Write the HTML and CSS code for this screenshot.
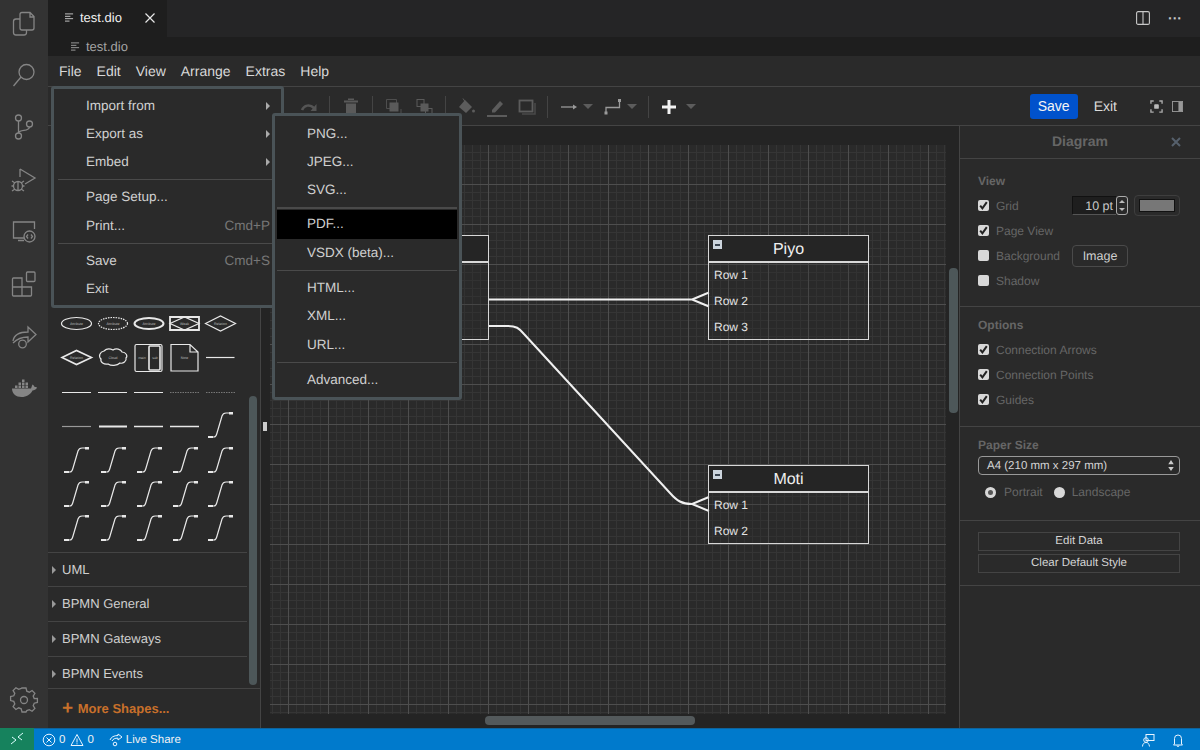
FILE: index.html
```html
<!doctype html>
<html>
<head>
<meta charset="utf-8">
<title>test.dio</title>
<link rel="stylesheet" href="styles.css">
</head>
<body>
<svg class="defs" width="0" height="0">
  <symbol id="tick" viewBox="0 0 11 11"><path d="M2.2 5.6 4.4 8.4 8.8 2.2" fill="none" stroke="#222" stroke-width="2"/></symbol>
  <symbol id="curve" viewBox="0 0 32 30"><path d="M2 26H8Q10 26 11 22L16 5Q17 2 20 2H26" fill="none" stroke="#e8e8e8" stroke-width="1.2"/><path d="M2 25h5v2H2zM23 1h4v2.500h-4z" fill="#e8e8e8"/></symbol>
  <symbol id="caret" viewBox="0 0 10 6"><path d="M0 0H10L5 5z" fill="#5c5c5c"/></symbol>
</svg>
<div class="shell">
  <nav class="activity">
    <svg class="act" viewBox="0 0 48 46"><path d="M20 19h-4a2.500 2.500 0 0 0-2.500 2.500v11A2.500 2.500 0 0 0 16 35h8a2.500 2.500 0 0 0 2.500-2.500V30M22 12.500h8l4 4V28a2 2 0 0 1-2 2H22a2 2 0 0 1-2-2V14.500a2 2 0 0 1 2-2zM30 12.500V17h4"/></svg>
    <svg class="act" viewBox="0 0 48 46"><circle cx="26.500" cy="20" r="7.500"/><path d="M21 25 13.500 34"/></svg>
    <svg class="act" viewBox="0 0 48 46"><circle cx="18.500" cy="14" r="3"/><circle cx="29.500" cy="20" r="3"/><circle cx="18.500" cy="32" r="3"/><path d="M18.500 17V29M29.500 23C29 28 20 25 18.500 29"/></svg>
    <svg class="act" viewBox="0 0 48 46"><path d="M20 13 35 22 25 28M20 13V21"/><circle cx="18" cy="30" r="4.500"/><path d="M12 25l3 2M24 25l-3 2M11.500 30h2M22.500 30h2M12 35l3-2M24 35l-3-2M18 26v8"/></svg>
    <svg class="act" viewBox="0 0 48 46"><path d="M24 30H13.500V14h21V21M18 32.500h6"/><circle cx="29.500" cy="28.500" r="5.500"/><path d="M28 26.500l-1.500 2 1.500 2M31 26.500l1.500 2-1.500 2"/></svg>
    <svg class="act" viewBox="0 0 48 46"><rect x="26.500" y="12" width="8.500" height="9.500" rx="1"/><path d="M12.500 19a1 1 0 0 1 1-1H22V36H13.500a1 1 0 0 1-1-1zM12.500 27H31.500V35a1 1 0 0 1-1 1H22"/></svg>
    <svg class="act" viewBox="0 0 48 46"><path d="M13 29c1-6 6-9 15-9v-5l8 7.500-8 7.500v-5c-6 0-10 1-15 6"/><circle cx="22.500" cy="32" r="3.800"/></svg>
    <svg class="act act-fill" viewBox="0 0 48 46"><path d="M12 24.500h19c.6-1 .8-3 1.500-4 1 .7 2 1.500 2 2.500 1 0 2 0 2.500.8-1 2-3 2.500-4.500 2.700-2 4-6 6.500-11 6.500-5.500 0-9.500-3.500-9.500-8.500z"/><path d="M15 21.500h2.500V24H15zM18.500 21.500H21V24h-2.500zM22 21.500h2.500V24H22zM25.500 21.500H28V24h-2.500zM18.500 18.500H21V21h-2.500zM22 18.500h2.500V21H22zM25.500 18.500H28V21h-2.500zM22 15.500h2.500V18H22z"/></svg>
    <svg class="act gear" viewBox="0 0 48 46"><circle cx="24" cy="23" r="3.500"/><path d="M22 11h4l.8 3.200 2.500 1 2.800-1.700 2.800 2.800-1.700 2.800 1 2.500L37.400 21.400v4l-3.200.8-1 2.500 1.700 2.800-2.800 2.800-2.800-1.700-2.500 1L26 35h-4l-.8-3.200-2.500-1-2.800 1.700-2.800-2.800 1.700-2.800-1-2.500-3.200-.8v-4l3.200-.8 1-2.500-1.700-2.800 2.800-2.800 2.800 1.700 2.500-1z"/></svg>
  </nav>

  <div class="editor">
    <div class="tabs">
      <div class="tab">
        <svg class="lines" viewBox="0 0 10 10"><path d="M0 1h9M0 3.700h6M0 6.300h9M0 9h5"/></svg>
        <span>test.dio</span>
        <svg class="tab-x" viewBox="0 0 10 10"><path d="M.5.500l9 9M9.500.500l-9 9"/></svg>
      </div>
      <div class="tab-actions">
        <svg class="split" viewBox="0 0 14 14"><rect x=".6" y=".6" width="12.800" height="12.800" rx="1.500"/><path d="M7 .6v12.800"/></svg>
        <span class="dots">···</span>
      </div>
    </div>
    <div class="crumbs">
      <svg class="lines dim" viewBox="0 0 10 10"><path d="M0 1h9M0 3.700h6M0 6.300h9M0 9h5"/></svg>
      <span>test.dio</span>
    </div>
    <div class="menubar">
      <span>File</span><span>Edit</span><span>View</span><span>Arrange</span><span>Extras</span><span>Help</span>
    </div>
    <div class="toolbar">
      <div class="tools">
        <svg class="tool" viewBox="0 0 20 20"><path d="M3 13c2-5 8-6 12-2" fill="none" stroke="#555" stroke-width="2.500"/><path d="M17.500 7v7h-6z" fill="#555"/></svg>
        <i class="sep"></i>
        <svg class="tool" viewBox="0 0 20 20"><path d="M3 3.500h14v2H3zM7 1.500h6v1.500H7zM5 6.500h10v12H5z" fill="#5a5a5a"/></svg>
        <i class="sep"></i>
        <svg class="tool" viewBox="0 0 20 20"><path d="M2.500 2.500h10v4" fill="none" stroke="#4e4e4e"/><path d="M2.500 2.500v9h4" fill="none" stroke="#4e4e4e"/><rect x="5.500" y="5.500" width="9" height="9" fill="#5a5a5a"/><path d="M17 12v5h-4" fill="none" stroke="#4e4e4e"/></svg>
        <svg class="tool" viewBox="0 0 20 20"><rect x="3" y="2.500" width="7" height="7" fill="none" stroke="#5a5a5a"/><rect x="6.500" y="6.500" width="8" height="8" fill="#5a5a5a"/><rect x="11.500" y="11.500" width="6.500" height="6.500" fill="none" stroke="#5a5a5a"/></svg>
        <i class="sep"></i>
        <svg class="tool" viewBox="0 0 20 20"><path d="M9 3 16 10 10 16 3 10z" fill="#5c5c5c"/><path d="M7 1.500 10 6" stroke="#5c5c5c" fill="none"/><circle cx="17.500" cy="14" r="1.500" fill="#5c5c5c"/></svg>
        <svg class="tool" viewBox="0 0 20 20"><path d="M5 13 13 4l3 3-8 8.500H5z" fill="#5c5c5c"/><path d="M0 18h20v2H0z" fill="#5c5c5c"/></svg>
        <svg class="tool" viewBox="0 0 20 20"><rect x="2.500" y="3.500" width="13" height="11" fill="none" stroke="#5c5c5c" stroke-width="1.800"/><path d="M5 17h13V6" fill="none" stroke="#4a4a4a" stroke-width="1.500"/></svg>
        <i class="sep"></i>
        <div class="tool-pair">
          <svg class="wide" viewBox="0 0 18 10"><path d="M1 5h13" stroke="#9a9a9a" stroke-width="1.300"/><path d="M13 2.500 17 5l-4 2.500z" fill="#9a9a9a"/></svg>
          <svg class="caret" viewBox="0 0 10 6"><use href="#caret"/></svg>
        </div>
        <div class="tool-pair">
          <svg class="wide-tall" viewBox="0 0 18 18"><path d="M2 15V9.500h13.500V3" fill="none" stroke="#9a9a9a" stroke-width="1.300"/><rect x=".5" y="13.500" width="3" height="3" fill="#9a9a9a"/><rect x="14" y="1" width="3" height="3" fill="#9a9a9a"/></svg>
          <svg class="caret" viewBox="0 0 10 6"><use href="#caret"/></svg>
        </div>
        <i class="sep"></i>
        <div class="tool-pair">
          <svg class="plus" viewBox="0 0 14 14"><path d="M5.500 0h3v5.500H14v3H8.500V14h-3V8.500H0v-3h5.500z" fill="#f2f2f2"/></svg>
          <svg class="caret" viewBox="0 0 10 6"><use href="#caret"/></svg>
        </div>
      </div>
      <div class="tool-right">
        <button class="save">Save</button>
        <span class="exit">Exit</span>
        <svg class="full" viewBox="0 0 14 14"><path d="M1 4V1h3M10 1h3v3M13 10v3h-3M4 13H1v-3" fill="none" stroke="#aaa" stroke-width="1.500"/><rect x="4.500" y="4.500" width="5" height="5" rx="1" fill="#bbb"/></svg>
        <svg class="format" viewBox="0 0 12 12"><rect x=".5" y=".5" width="11" height="11" fill="none" stroke="#999"/><rect x="7" y="1" width="4" height="10" fill="#999"/></svg>
      </div>
    </div>

    <div class="workspace">
      <aside class="sidebar">
        <svg class="palette" viewBox="48 126 199 426">
          <g fill="none" stroke="#e8e8e8" stroke-width="1.200">
            <ellipse cx="76.500" cy="323.500" rx="15" ry="6"/>
            <ellipse cx="113" cy="323.500" rx="14.500" ry="6" stroke-dasharray="1.500 1"/>
            <ellipse cx="149" cy="323.500" rx="14.500" ry="5.500" stroke-width="2"/>
            <path d="M170 317h29v13h-29z" stroke-width="1.800"/>
            <path d="M170 323.500 184.500 317l14.500 6.500-14.500 6.500z"/>
            <path d="M205.500 323.500 220.500 316l15 7.500-15 7.500z"/>
            <path d="M62 357.500 76.500 350.500l15 7-15 7z" stroke-width="1.600"/>
            <path d="M104 351c3-3 7-2 9-1 3-2 8-1 9 2 4 0 6 4 4 6 1 3-3 6-6 5-3 3-9 3-12 1-4 1-8-2-7-5-3-3-1-7 3-8z"/>
            <rect x="135" y="344.500" width="27" height="27" rx="1.500"/>
            <rect x="149" y="346" width="11" height="24" rx="1" stroke-width="1.600"/>
            <path d="M171 344.500h19l8 7.500v19h-27zM190 344.500v7.500h8"/>
            <path d="M206 357.500h28.500"/>
            <path d="M62 392.500h29M98 392.500h29M134 392.500h29"/>
            <path d="M170 392.500h29M206 392.500h29" stroke="#777" stroke-dasharray="1.500 1"/>
            <path d="M62 426.500h29" stroke="#999"/>
            <path d="M99 426.500h28" stroke-width="2"/>
            <path d="M134 426.500h29M170 426.500h29" stroke-width="1.600"/>
          </g>
          <g class="tiny">
            <text x="76.500" y="325">Attribute</text>
            <text x="113" y="325">Attribute</text>
            <text x="149" y="325">Attribute</text>
            <text x="184.500" y="325">Weak</text>
            <text x="220.500" y="325">Relation</text>
            <text x="76.500" y="359">Relation</text>
            <text x="113" y="359">Cloud</text>
            <text x="142" y="359">main</text>
            <text x="155" y="359">sub</text>
            <text x="184.500" y="359">Note</text>
          </g>
          <use href="#curve" x="206" y="411" width="32" height="30"/>
          <use href="#curve" x="62" y="446" width="32" height="30"/><use href="#curve" x="99" y="446" width="32" height="30"/><use href="#curve" x="135" y="446" width="32" height="30"/><use href="#curve" x="171" y="446" width="32" height="30"/><use href="#curve" x="206" y="446" width="32" height="30"/>
          <use href="#curve" x="62" y="480" width="32" height="30"/><use href="#curve" x="99" y="480" width="32" height="30"/><use href="#curve" x="135" y="480" width="32" height="30"/><use href="#curve" x="171" y="480" width="32" height="30"/><use href="#curve" x="206" y="480" width="32" height="30"/>
          <use href="#curve" x="62" y="514" width="32" height="30"/><use href="#curve" x="99" y="514" width="32" height="30"/><use href="#curve" x="135" y="514" width="32" height="30"/><use href="#curve" x="171" y="514" width="32" height="30"/><use href="#curve" x="206" y="514" width="32" height="30"/>
        </svg>
        <div class="group group-first">UML</div>
        <div class="group">BPMN General</div>
        <div class="group">BPMN Gateways</div>
        <div class="group group-last">BPMN Events</div>
        <div class="more"><b>+</b> More Shapes...</div>
        <div class="side-thumb"></div>
      </aside>

      <main class="canvas">
        <div class="sheet">
          <svg class="edges" viewBox="270 145 676 569">
            <g fill="none" stroke="#f0f0f0" stroke-width="2">
              <path d="M488 299.500H692M709 292.500 692 299.500 709 306.500"/>
              <path d="M488 326H508C516 326 519 328 524 334L670 493C677 501 682 504 692 504M709 497 692 504 709 511"/>
            </g>
          </svg>
          <div class="entity entity-hidden">
            <div class="entity-head"></div>
          </div>
          <div class="entity entity-piyo">
            <div class="entity-head"><i class="fold"></i>Piyo</div>
            <div class="row">Row 1</div><div class="row">Row 2</div><div class="row">Row 3</div>
          </div>
          <div class="entity entity-moti">
            <div class="entity-head"><i class="fold"></i>Moti</div>
            <div class="row">Row 1</div><div class="row">Row 2</div>
          </div>
        </div>
        <i class="handle"></i>
        <div class="thumb-v"></div>
        <div class="thumb-h"></div>
      </main>

      <aside class="panel">
        <div class="panel-head"><span>Diagram</span><svg class="panel-x" viewBox="0 0 10 10"><path d="M1 1l8 8M9 1l-8 8"/></svg></div>
        <section class="sect sect-view">
          <h4>View</h4>
          <div class="opt opt-grid">
            <span class="box"><svg viewBox="0 0 11 11"><use href="#tick"/></svg></span><label>Grid</label>
            <span class="pt">10 pt</span>
            <span class="spin"><i></i><i class="down"></i></span>
            <span class="swatch"><i></i></span>
          </div>
          <div class="opt"><span class="box"><svg viewBox="0 0 11 11"><use href="#tick"/></svg></span><label>Page View</label></div>
          <div class="opt"><span class="box"></span><label>Background</label><span class="img-btn">Image</span></div>
          <div class="opt"><span class="box"></span><label>Shadow</label></div>
        </section>
        <section class="sect sect-options">
          <h4>Options</h4>
          <div class="opt"><span class="box"><svg viewBox="0 0 11 11"><use href="#tick"/></svg></span><label>Connection Arrows</label></div>
          <div class="opt"><span class="box"><svg viewBox="0 0 11 11"><use href="#tick"/></svg></span><label>Connection Points</label></div>
          <div class="opt"><span class="box"><svg viewBox="0 0 11 11"><use href="#tick"/></svg></span><label>Guides</label></div>
        </section>
        <section class="sect sect-paper">
          <h4>Paper Size</h4>
          <div class="select"><span>A4 (210 mm x 297 mm)</span><svg viewBox="0 0 6 12"><path d="M3 0 6 4.500H0zM3 12 0 7.500H6z" fill="#ccc"/></svg></div>
          <div class="radios">
            <span class="radio on"></span><label>Portrait</label>
            <span class="radio"></span><label>Landscape</label>
          </div>
        </section>
        <section class="sect sect-btns">
          <div class="wide-btn">Edit Data</div>
          <div class="wide-btn">Clear Default Style</div>
        </section>
      </aside>
    </div>
  </div>
</div>

<footer class="status">
  <span class="remote"><svg viewBox="0 0 14 14"><path d="M1 12 6 8 2 5M13 1 8 5l4 3" fill="none" stroke="#dff" stroke-width="1"/></svg></span>
  <span class="stat errs">
    <svg viewBox="0 0 14 14"><circle cx="7" cy="7" r="5.800"/><path d="M4.500 4.500l5 5M9.500 4.500l-5 5"/></svg>0
    <svg viewBox="0 0 14 14"><path d="M7 1.500 13 12.500H1z"/><path d="M7 5.500v4M7 10.300v1"/></svg>0
  </span>
  <span class="stat share">
    <svg viewBox="0 0 14 14"><path d="M1 7c1-3 4-4.500 8-4.500V1l4 3-4 3V5.200C6 5 4 6 3 8"/><circle cx="6" cy="11" r="1.800"/></svg>Live Share
  </span>
  <span class="status-right">
    <svg viewBox="0 0 14 14"><rect x="5" y="1.500" width="8" height="6"/><circle cx="5" cy="7" r="2.300"/><path d="M1.500 13.500c0-2.500 1.500-4 3.500-4s3 1 3.500 4"/></svg>
    <svg viewBox="0 0 14 14"><path d="M3.500 11V5.500a3.500 3.500 0 0 1 7 0V11l1 1h-9zM6 12.500c0 1.500 2 1.500 2 0"/></svg>
  </span>
</footer>

<div class="menu menu-file">
  <div class="item has-sub">Import from</div>
  <div class="item has-sub">Export as</div>
  <div class="item has-sub">Embed</div>
  <hr>
  <div class="item">Page Setup...</div>
  <div class="item">Print...<em>Cmd+P</em></div>
  <hr>
  <div class="item">Save<em>Cmd+S</em></div>
  <div class="item">Exit</div>
</div>
<div class="menu menu-export">
  <div class="item">PNG...</div>
  <div class="item">JPEG...</div>
  <div class="item">SVG...</div>
  <hr class="thick">
  <div class="item active">PDF...</div>
  <div class="item">VSDX (beta)...</div>
  <hr>
  <div class="item">HTML...</div>
  <div class="item">XML...</div>
  <div class="item">URL...</div>
  <hr>
  <div class="item">Advanced...</div>
</div>
</body>
</html>
```

FILE: styles.css
```css
html, body {
    margin: 0;
    width: 1200px;
    height: 750px;
    overflow: hidden;
    background: #2a2a2a;
    font-family: "Liberation Sans", Arial, sans-serif;
    color: #d0d0d0;
    text-rendering: geometricPrecision;
}
body {
    display: flex;
    flex-direction: column;
    position: relative;
}
.defs {
    position: absolute;
}
.shell {
    display: flex;
    height: 728px;
}

/* activity bar */
.activity {
    width: 48px;
    flex: none;
    background: #333;
    display: flex;
    flex-direction: column;
    gap: 6px;
}
.act {
    width: 48px;
    height: 46px;
    flex: none;
    fill: none;
    stroke: #858585;
    stroke-width: 1.300;
}
.act-fill {
    fill: #858585;
    stroke: none;
}
.gear {
    margin-top: auto;
    margin-bottom: 5px;
}

.editor {
    flex: 1;
    min-width: 0;
    display: flex;
    flex-direction: column;
}

/* tabs */
.tabs {
    height: 37px;
    background: #252526;
    display: flex;
    justify-content: space-between;
}
.tab {
    width: 119px;
    background: #1e1e1e;
    display: flex;
    align-items: center;
    font-size: 13px;
    color: #f0f0f0;
    padding: 0 0 2px 17px;
    box-sizing: border-box;
}
.lines {
    width: 9px;
    height: 9px;
    fill: none;
    stroke: #c0c0c0;
    stroke-width: 1.100;
    margin-right: 6px;
}
.lines.dim {
    stroke: #999;
}
.tab-x {
    width: 10px;
    height: 10px;
    margin-left: 23px;
    stroke: #e8e8e8;
    stroke-width: 1.200;
}
.tab-actions {
    display: flex;
    align-items: center;
    padding: 0 18px 2px 0;
}
.split {
    width: 14px;
    height: 14px;
    fill: none;
    stroke: #c8c8c8;
    stroke-width: 1.100;
}
.dots {
    margin-left: 18px;
    width: 14px;
    font-size: 14px;
    font-weight: bold;
    color: #c8c8c8;
}
.crumbs {
    height: 19px;
    background: #1e1e1e;
    display: flex;
    align-items: center;
    padding-left: 23px;
    font-size: 13px;
    color: #a4a4a4;
}

/* drawio bars */
.menubar {
    height: 30px;
    background: #2a2a2a;
    border-bottom: 1px solid #444;
    display: flex;
    align-items: center;
    gap: 15px;
    padding-left: 11px;
    font-size: 14px;
    color: #d8d8d8;
}
.toolbar {
    height: 38px;
    box-sizing: content-box;
    background: #2a2a2a;
    border-bottom: 1px solid #444;
    display: flex;
    align-items: center;
    justify-content: space-between;
}
.tools {
    margin: 2px 0 0 246px;
    display: grid;
    grid-template-columns: 30px 11px 32px 11px 31px 30px 12px 30px 31px 30px 10px 48px 40px 16px 46px;
    align-items: center;
    justify-items: center;
}
.tool {
    width: 20px;
    height: 20px;
}
.sep {
    width: 1px;
    height: 22px;
    background: #444;
}
.tool-pair {
    display: flex;
    align-items: center;
    gap: 5px;
}
.wide {
    width: 18px;
    height: 10px;
}
.wide-tall {
    width: 18px;
    height: 18px;
}
.plus {
    width: 14px;
    height: 14px;
    margin-right: 5px;
}
.caret {
    width: 10px;
    height: 6px;
}
.tool-right {
    display: flex;
    align-items: center;
    padding-right: 17px;
}
.save {
    width: 48px;
    height: 25px;
    border: 0;
    padding: 0;
    border-radius: 3px;
    background: #0052cc;
    color: #f4f4f4;
    font: 14px "Liberation Sans", Arial, sans-serif;
}
.exit {
    margin-left: 16px;
    font-size: 14px;
    color: #dcdcdc;
}
.full {
    width: 13px;
    height: 13px;
    margin-left: 33px;
}
.format {
    width: 11px;
    height: 11px;
    margin-left: 9px;
}

.workspace {
    flex: 1;
    min-height: 0;
    display: flex;
}

/* shapes */
.sidebar {
    width: 212px;
    flex: none;
    position: relative;
    background: #2a2a2a;
    border-right: 1px solid #444;
    display: flex;
    flex-direction: column;
}
.palette {
    width: 199px;
    height: 426px;
    flex: none;
}
.tiny text {
    font-size: 3.500px;
    fill: #bbb;
    text-anchor: middle;
}
.group {
    width: 199px;
    height: 35px;
    flex: none;
    box-sizing: border-box;
    border-top: 1px solid #444;
    padding-left: 14px;
    line-height: 33px;
    font-size: 13px;
    color: #cfcfcf;
    position: relative;
}
.group::before {
    content: "";
    position: absolute;
    left: 4px;
    top: 13px;
    border-left: 4px solid #999;
    border-top: 4px solid transparent;
    border-bottom: 4px solid transparent;
}
.group-first {
    height: 34px;
}
.group-last {
    height: 32px;
}
.more {
    flex: 1;
    box-sizing: border-box;
    border-top: 1px solid #444;
    padding-left: 14px;
    line-height: 39px;
    font-size: 13px;
    font-weight: bold;
    color: #c8702a;
}
.more b {
    font-size: 19px;
    vertical-align: -1px;
    margin-right: 1px;
}
.side-thumb {
    position: absolute;
    left: 201px;
    top: 270px;
    width: 8px;
    height: 289px;
    border-radius: 4px;
    background: #4d5759;
}

/* drawing */
.canvas {
    flex: 1;
    position: relative;
    background: #242424;
    padding: 19px 13px 14px 9px;
    min-width: 0;
}
.sheet {
    position: relative;
    height: 100%;
    background-color: #2a2a2a;
    background-image:
        linear-gradient(to right, #4e4e4e 1px, transparent 1px),
        linear-gradient(to bottom, #4e4e4e 1px, transparent 1px),
        linear-gradient(to right, #353535 1px, transparent 1px),
        linear-gradient(to bottom, #353535 1px, transparent 1px);
    background-size: 40px 40px, 40px 40px, 8px 8px, 8px 8px;
    background-position: 18px 0, 0 39px, 2px 0, 0 7px;
}
.edges {
    position: absolute;
    left: 0;
    top: 0;
    width: 676px;
    height: 569px;
}
.entity {
    position: absolute;
    width: 161px;
    box-sizing: border-box;
    background: rgba(42, 42, 42, .25);
    border: 1px solid #d8d8d8;
}
.entity-hidden {
    left: 160px;
    top: 90px;
    width: 59px;
    height: 105px;
}
.entity-piyo {
    left: 438px;
    top: 90px;
    height: 105px;
}
.entity-moti {
    left: 438px;
    top: 320px;
    height: 79px;
}
.entity-head {
    height: 25px;
    border-bottom: 2px solid #d8d8d8;
    position: relative;
    text-align: center;
    font-size: 16px;
    line-height: 27px;
    color: #f0f0f0;
    background: #252525;
}
.fold {
    position: absolute;
    left: 4px;
    top: 4px;
    width: 9px;
    height: 9px;
    background: linear-gradient(#3a4450, #3a4450) center / 5px 2px no-repeat, #ccd4dc;
}
.row {
    height: 26px;
    line-height: 25px;
    padding-left: 5px;
    font-size: 12px;
    color: #e4e4e4;
}
.handle {
    position: absolute;
    left: 2px;
    top: 296px;
    width: 4px;
    height: 9px;
    background: #ccc;
}
.thumb-v {
    position: absolute;
    left: 688px;
    top: 142px;
    width: 9px;
    height: 145px;
    border-radius: 4px;
    background: #4d5759;
}
.thumb-h {
    position: absolute;
    left: 224px;
    top: 590px;
    width: 210px;
    height: 9px;
    border-radius: 4px;
    background: #53595b;
}

/* format panel */
.panel {
    width: 241px;
    flex: none;
    box-sizing: border-box;
    border-left: 1px solid #444;
    background: #2a2a2a;
}
.panel-head {
    height: 33px;
    box-sizing: border-box;
    border-bottom: 1px solid #444;
    position: relative;
    text-align: center;
    font-size: 14px;
    font-weight: bold;
    line-height: 31px;
    color: #666;
}
.panel-x {
    position: absolute;
    right: 19px;
    top: 11px;
    width: 10px;
    height: 10px;
    stroke: #56606c;
    stroke-width: 2;
}
.sect {
    box-sizing: border-box;
    border-bottom: 1px solid #444;
    padding: 15px 20px 0 18px;
}
.sect h4 {
    margin: 0;
    font-size: 12px;
    line-height: 15px;
    color: #666;
}
.sect-view {
    height: 148px;
}
.sect-options {
    height: 120px;
    padding-top: 11px;
}
.sect-paper {
    height: 94px;
    padding-top: 11px;
}
.sect-btns {
    height: 65px;
    padding-top: 11px;
    display: flex;
    flex-direction: column;
    gap: 3px;
}
.opt {
    height: 25px;
    display: flex;
    align-items: center;
    font-size: 12px;
    color: #666;
}
.sect h4 + .opt {
    margin-top: 4px;
}
.box {
    width: 11px;
    height: 11px;
    flex: none;
    border-radius: 2px;
    background: #d8d8d8;
    margin-right: 7px;
}
.box svg {
    display: block;
    width: 11px;
    height: 11px;
}
.opt label {
    width: 76px;
    flex: none;
    white-space: nowrap;
}
.opt-grid {
    position: relative;
}
.pt {
    width: 44px;
    height: 19px;
    box-sizing: border-box;
    background: #1e1e1e;
    border-top: 1px solid #111;
    border-left: 1px solid #111;
    border-bottom: 1px solid #555;
    text-align: right;
    padding-right: 3px;
    line-height: 19px;
    font-size: 12.500px;
    color: #c8c8c8;
}
.spin {
    width: 12px;
    height: 19px;
    box-sizing: border-box;
    border: 1px solid #aaa;
    border-radius: 3px;
    display: flex;
    flex-direction: column;
    align-items: center;
    justify-content: space-around;
}
.spin i {
    border-left: 3px solid transparent;
    border-right: 3px solid transparent;
    border-bottom: 3px solid #bbb;
}
.spin i.down {
    border-bottom: 0;
    border-top: 3px solid #bbb;
}
.swatch {
    width: 46px;
    height: 21px;
    box-sizing: border-box;
    margin-left: 6px;
    padding: 3px 4px;
    border: 1px solid #3e3e3e;
    border-radius: 4px;
}
.swatch i {
    display: block;
    height: 13px;
    background: #777;
    border: 1px solid #111;
    box-sizing: border-box;
}
.img-btn {
    width: 56px;
    height: 22px;
    box-sizing: border-box;
    border: 1px solid #4a4a4a;
    border-radius: 4px;
    text-align: center;
    line-height: 20px;
    font-size: 12.500px;
    color: #cfcfcf;
}
.select {
    margin-top: 3px;
    height: 19px;
    box-sizing: border-box;
    border: 1px solid #999;
    border-radius: 4px;
    display: flex;
    align-items: center;
    justify-content: space-between;
    padding: 0 5px 0 8px;
    font-size: 11.500px;
    color: #d4d4d4;
}
.select svg {
    width: 6px;
    height: 11px;
}
.radios {
    display: flex;
    align-items: center;
    margin-top: 10px;
    padding-left: 7px;
    font-size: 12px;
    color: #666;
}
.radio {
    width: 11px;
    height: 11px;
    border-radius: 50%;
    background: #d8d8d8;
    box-sizing: border-box;
    margin-right: 8px;
}
.radio + label + .radio {
    margin-right: 7px;
}
.radio.on {
    border: 3px solid #d8d8d8;
    background: #555;
}
.radios label:first-of-type {
    margin-right: 11px;
}
.wide-btn {
    height: 19px;
    box-sizing: border-box;
    border: 1px solid #444;
    text-align: center;
    line-height: 17px;
    font-size: 11.500px;
    color: #d4d4d4;
}

/* status bar */
.status {
    height: 22px;
    background: #007acc;
    display: flex;
    align-items: center;
    font-size: 11.500px;
    color: #f2f2f2;
    border-top: 1px solid #0e639c;
    box-sizing: border-box;
}
.status svg {
    width: 14px;
    height: 14px;
    fill: none;
    stroke: #e8f4ff;
    stroke-width: 1;
}
.remote {
    width: 34px;
    height: 22px;
    margin-top: -1px;
    background: #16825d;
    display: flex;
    align-items: center;
    justify-content: center;
}
.stat {
    display: flex;
    align-items: center;
    gap: 3px;
}
.errs {
    margin-left: 8px;
}
.errs svg + svg {
    margin-left: 2px;
}
.share {
    margin-left: 15px;
}
.status-right {
    margin-left: auto;
    display: flex;
    gap: 16px;
    padding-right: 15px;
}

/* dropdown menus */
.menu {
    position: absolute;
    box-sizing: border-box;
    background: #2a2a2a;
    border: 3px solid #4a5357;
    border-radius: 3px;
    padding: 2.500px 2px 2px;
    font-size: 13.500px;
    color: #d0d0d0;
}
.menu-file {
    left: 51px;
    top: 86px;
    width: 233px;
    height: 222px;
}
.menu-export {
    left: 272px;
    top: 113px;
    width: 190px;
    height: 287px;
    padding-top: 3.500px;
}
.item {
    height: 28.330px;
    line-height: 28px;
    padding-left: 30px;
    position: relative;
}
.item em {
    position: absolute;
    right: 9px;
    font-style: normal;
    color: #777;
}
.has-sub::after {
    content: "";
    position: absolute;
    right: 9px;
    top: 10px;
    border-left: 4px solid #aaa;
    border-top: 4px solid transparent;
    border-bottom: 4px solid transparent;
}
.item.active {
    background: #000;
}
.menu hr {
    border: 0;
    height: 1px;
    background: #4a4a4a;
    margin: 3px 0;
}
.menu-file hr {
    margin: 3px 0 3px 2px;
}
.menu hr.thick {
    height: 2px;
    margin: 3px 0 1px;
}
```
